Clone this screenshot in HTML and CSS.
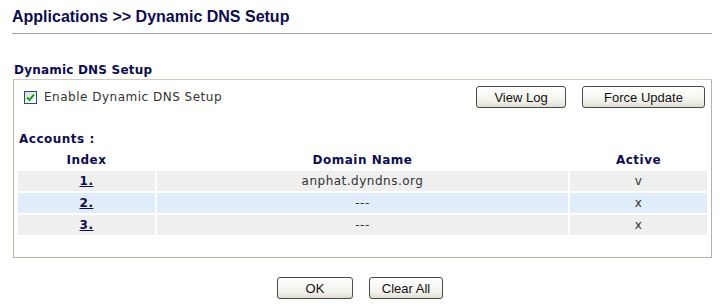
FILE: index.html
```html
<!DOCTYPE html>
<html lang="en">
<head>
    <meta charset="UTF-8">
    <title>Dynamic DNS Setup</title>
    <link rel="stylesheet" href="styles.css">
</head>
<body>
    <h1 class="page-title">Applications &gt;&gt; Dynamic DNS Setup</h1>

    <div class="section">
        <div class="section-title">Dynamic DNS Setup</div>
        <div class="panel">
            <div class="top-row">
                <label class="check">
                    <span class="box">
                        <svg width="9" height="9" viewBox="0 0 9 9"><path d="M1 4.5 L3.5 7 L8 1.5" fill="none" stroke="#21a121" stroke-width="2"/></svg>
                    </span>
                    Enable Dynamic DNS Setup
                </label>
                <div class="actions">
                    <button class="btn btn-log">View Log</button>
                    <button class="btn btn-force">Force Update</button>
                </div>
            </div>

            <div class="accounts-label">Accounts :</div>
            <table class="accounts">
                <thead>
                    <tr>
                        <th class="col-index">Index</th>
                        <th>Domain Name</th>
                        <th class="col-active">Active</th>
                    </tr>
                </thead>
                <tbody>
                    <tr class="odd">
                        <td><a href="#">1.</a></td>
                        <td>anphat.dyndns.org</td>
                        <td>v</td>
                    </tr>
                    <tr class="even">
                        <td><a href="#">2.</a></td>
                        <td>---</td>
                        <td>x</td>
                    </tr>
                    <tr class="odd">
                        <td><a href="#">3.</a></td>
                        <td>---</td>
                        <td>x</td>
                    </tr>
                </tbody>
            </table>
        </div>
    </div>

    <div class="footer">
        <button class="btn btn-ok">OK</button>
        <button class="btn btn-clear">Clear All</button>
    </div>
</body>
</html>
```

FILE: styles.css
```css
:root {
    --navy: #0c0c4e;
    --border: #b5b2a6;
    --row: #efefef;
    --row-alt: #e1edfb;
    --text: #333;
}

body {
    margin: 0;
    padding: 7px 12px 0 12px;
    background: #fff;
    font-family: 'DejaVu Sans', Verdana, sans-serif;
    font-size: 12px;
    letter-spacing: 0.5px;
    color: var(--text);
}

.page-title {
    margin: 0;
    padding-bottom: 7px;
    font-family: 'Liberation Sans', Arial, sans-serif;
    font-size: 16px;
    line-height: 19px;
    font-weight: bold;
    letter-spacing: 0;
    color: var(--navy);
    border-bottom: 1px solid #a3a3a3;
    width: 700px;
}

.section {
    margin-top: 28px;
    margin-left: 1px;
    width: 699px;
}

.section-title {
    padding-left: 1px;
    font-size: 12px;
    line-height: 17px;
    font-weight: bold;
    letter-spacing: 0.2px;
    color: var(--navy);
}

.panel {
    border: 1px solid var(--border);
    border-top-color: #cfcbbf;
    padding: 6px 2px 20px 2px;
}

.top-row {
    display: flex;
    align-items: center;
    justify-content: space-between;
    height: 22px;
}

.check {
    display: flex;
    align-items: center;
    gap: 7px;
    padding-left: 8px;
    color: var(--text);
}

.box {
    display: flex;
    align-items: center;
    justify-content: center;
    width: 11px;
    height: 11px;
    border: 1px solid #1c5180;
    background: linear-gradient(135deg, #dcdcd6, #fff);
}

.actions {
    display: flex;
    gap: 16px;
    padding-right: 4px;
}

.btn {
    font-family: 'Liberation Sans', Arial, sans-serif;
    font-size: 13px;
    letter-spacing: 0;
    color: #111;
    height: 22px;
    padding: 0;
    border: 1px solid #4a4a4a;
    border-radius: 3px;
    background: linear-gradient(#ffffff, #f2f2ec 70%, #dedbd2);
}

.btn-log { width: 90px; }
.btn-force { width: 123px; }
.btn-ok { width: 76px; }
.btn-clear { width: 74px; }

.accounts-label {
    margin-top: 23px;
    padding-left: 3px;
    font-weight: bold;
    color: var(--navy);
    line-height: 16px;
}

.accounts {
    width: 100%;
    border-spacing: 2px;
    margin-top: 2px;
}

.accounts th {
    height: 18px;
    font-weight: bold;
    color: var(--navy);
    text-align: center;
    padding: 0;
}

.col-index,
.col-active {
    width: 137px;
}

.accounts td {
    height: 20px;
    padding: 0;
    text-align: center;
    color: var(--text);
}

.accounts tr.odd td { background: var(--row); }
.accounts tr.even td { background: var(--row-alt); }

.accounts a {
    color: var(--navy);
    font-weight: bold;
}

.footer {
    display: flex;
    justify-content: center;
    gap: 16px;
    margin-top: 19px;
    padding-right: 4px;
}
```
